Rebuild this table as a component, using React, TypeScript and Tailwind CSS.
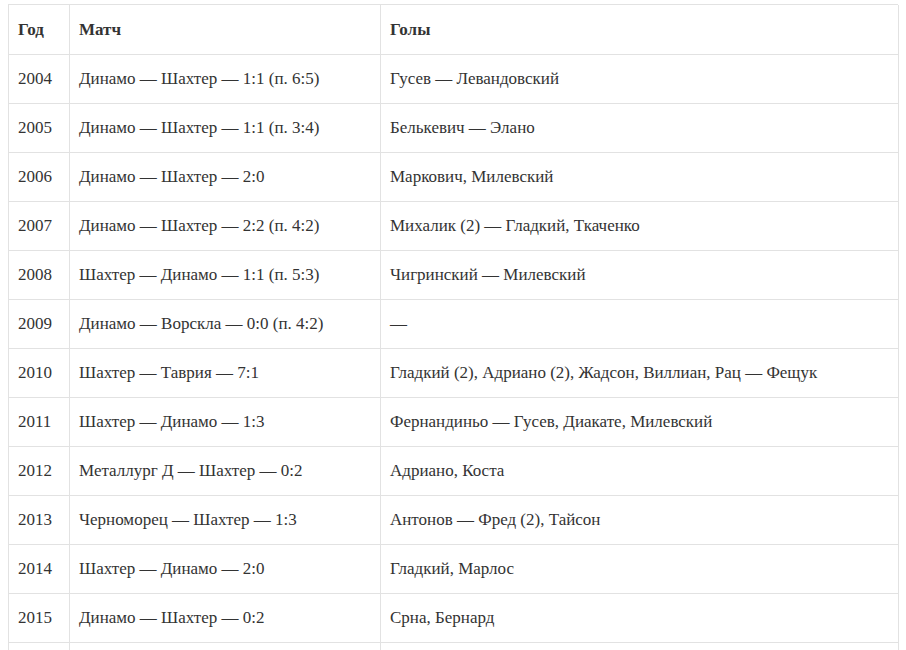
const rows = [
  ["2004", "Динамо — Шахтер — 1:1 (п. 6:5)", "Гусев — Левандовский"],
  ["2005", "Динамо — Шахтер — 1:1 (п. 3:4)", "Белькевич — Элано"],
  ["2006", "Динамо — Шахтер — 2:0", "Маркович, Милевский"],
  ["2007", "Динамо — Шахтер — 2:2 (п. 4:2)", "Михалик (2) — Гладкий, Ткаченко"],
  ["2008", "Шахтер — Динамо — 1:1 (п. 5:3)", "Чигринский — Милевский"],
  ["2009", "Динамо — Ворскла — 0:0 (п. 4:2)", "—"],
  ["2010", "Шахтер — Таврия — 7:1", "Гладкий (2), Адриано (2), Жадсон, Виллиан, Рац — Фещук"],
  ["2011", "Шахтер — Динамо — 1:3", "Фернандиньо — Гусев, Диакате, Милевский"],
  ["2012", "Металлург Д — Шахтер — 0:2", "Адриано, Коста"],
  ["2013", "Черноморец — Шахтер — 1:3", "Антонов — Фред (2), Тайсон"],
  ["2014", "Шахтер — Динамо — 2:0", "Гладкий, Марлос"],
  ["2015", "Динамо — Шахтер — 0:2", "Срна, Бернард"],
  ["", "", ""],
];

const cell =
  "flex items-center h-[49px] px-[9px] border-r border-b border-[#e2e2e2] whitespace-nowrap";

export default function App() {
  return (
    <div className="bg-white h-[650px] overflow-hidden px-[8px] pt-[4px] font-['Liberation_Serif'] text-[17px] text-[#333]">
      <div className="grid grid-cols-[61px_311px_518px] border-l border-t border-[#e2e2e2]">
        <div className={`${cell} h-[50px] font-bold`}>Год</div>
        <div className={`${cell} h-[50px] font-bold`}>Матч</div>
        <div className={`${cell} h-[50px] font-bold`}>Голы</div>
        {rows.map((r, i) => (
          <div key={i} className="contents">
            <div className={cell}>{r[0]}</div>
            <div className={cell}>{r[1]}</div>
            <div className={cell}>{r[2]}</div>
          </div>
        ))}
      </div>
    </div>
  );
}
